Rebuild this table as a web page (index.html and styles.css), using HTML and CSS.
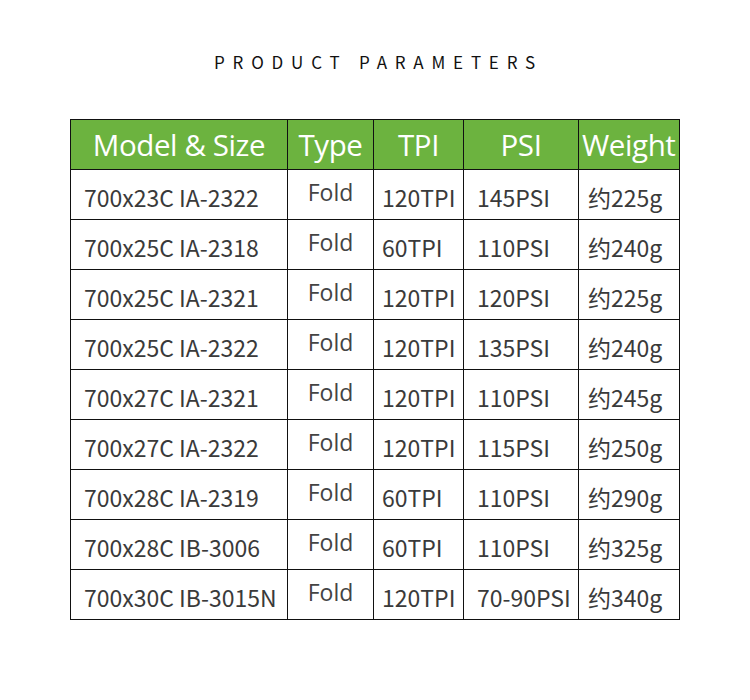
FILE: index.html
```html
<!DOCTYPE html>
<html>
<head>
<meta charset="utf-8">
<link rel="stylesheet" href="styles.css">
</head>
<body>
<div class="page">
  <h1 class="title">PRODUCT PARAMETERS</h1>
  <table class="params">
    <colgroup>
      <col class="c-model"><col class="c-type"><col class="c-tpi"><col class="c-psi"><col class="c-weight">
    </colgroup>
    <thead>
      <tr>
        <th class="h-model">Model &amp; Size</th>
        <th class="h-type">Type</th>
        <th class="h-tpi">TPI</th>
        <th class="h-psi">PSI</th>
        <th class="h-weight"><span>Weight</span></th>
      </tr>
    </thead>
    <tbody>
      <tr><td class="model">700x23C IA-2322</td><td class="type">Fold</td><td class="tpi">120TPI</td><td class="psi">145PSI</td><td class="weight">约225g</td></tr>
      <tr><td class="model">700x25C IA-2318</td><td class="type">Fold</td><td class="tpi">60TPI</td><td class="psi">110PSI</td><td class="weight">约240g</td></tr>
      <tr><td class="model">700x25C IA-2321</td><td class="type">Fold</td><td class="tpi">120TPI</td><td class="psi">120PSI</td><td class="weight">约225g</td></tr>
      <tr><td class="model">700x25C IA-2322</td><td class="type">Fold</td><td class="tpi">120TPI</td><td class="psi">135PSI</td><td class="weight">约240g</td></tr>
      <tr><td class="model">700x27C IA-2321</td><td class="type">Fold</td><td class="tpi">120TPI</td><td class="psi">110PSI</td><td class="weight">约245g</td></tr>
      <tr><td class="model">700x27C IA-2322</td><td class="type">Fold</td><td class="tpi">120TPI</td><td class="psi">115PSI</td><td class="weight">约250g</td></tr>
      <tr><td class="model">700x28C IA-2319</td><td class="type">Fold</td><td class="tpi">60TPI</td><td class="psi">110PSI</td><td class="weight">约290g</td></tr>
      <tr><td class="model">700x28C IB-3006</td><td class="type">Fold</td><td class="tpi">60TPI</td><td class="psi">110PSI</td><td class="weight">约325g</td></tr>
      <tr><td class="model">700x30C IB-3015N</td><td class="type">Fold</td><td class="tpi">120TPI</td><td class="psi">70-90PSI</td><td class="weight">约340g</td></tr>
    </tbody>
  </table>
</div>
</body>
</html>
```

FILE: styles.css
```css
html, body {
  margin: 0;
  padding: 0;
  background: #ffffff;
}

.page {
  width: 750px;
  padding-top: 50px;
  display: flex;
  flex-direction: column;
  align-items: center;
}

.title {
  margin: 0;
  font-family: "Noto Sans CJK SC", "Noto Sans", sans-serif;
  font-weight: 400;
  font-size: 17px;
  line-height: 24px;
  letter-spacing: 7.8px;
  padding-left: 7px;
  color: #111111;
}

.params {
  margin-top: 45px;
  border-collapse: collapse;
  table-layout: fixed;
  width: 609px;
}

.c-model { width: 217px; }
.c-type { width: 86px; }
.c-tpi { width: 90px; }
.c-psi { width: 115px; }
.c-weight { width: 101px; }

.params th,
.params td {
  border: 1px solid #111111;
  padding: 0;
  height: 50px;
  box-sizing: border-box;
  white-space: nowrap;
  overflow: hidden;
}

.params th {
  background: #6cb33f;
  color: #ffffff;
  font-family: "Open Sans", "Noto Sans", sans-serif;
  font-weight: 500;
  font-size: 29.5px;
  line-height: 40px;
  text-align: center;
  letter-spacing: -0.4px;
}

.params th.h-weight {
  text-align: left;
  padding-left: 3px;
}

.params td {
  font-family: "Noto Sans CJK SC", "Noto Sans", sans-serif;
  font-size: 23px;
  color: #3a3a3a;
  line-height: 30px;
  text-align: left;
  padding-top: 4px;
}

.params td.model { padding-left: 13px; }
.params td.tpi { padding-left: 8px; }
.params td.psi { padding-left: 13px; }
.params td.weight { padding-left: 9px; }

.params td.type {
  font-family: "Open Sans", "Noto Sans", sans-serif;
  font-size: 23px;
  font-weight: 500;
  color: #444444;
  text-align: center;
  padding-top: 0;
  padding-bottom: 5px;
}
```
